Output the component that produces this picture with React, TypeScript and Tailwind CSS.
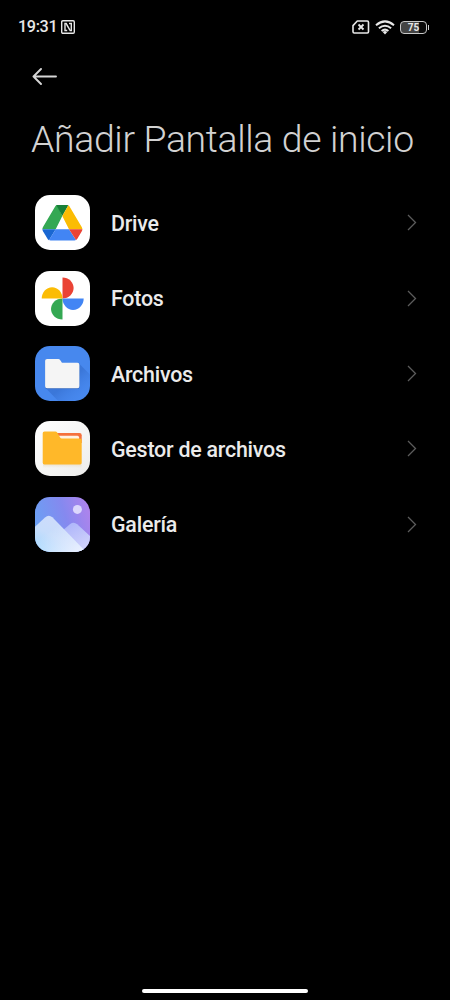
import React from 'react';

interface AppEntry {
  name: string;
  icon: React.ReactNode;
}

const iconClass = 'block h-[55px] w-[55px] rounded-[15px]';

const DriveIcon = () => (
  <svg viewBox="0 0 55 55" className={iconClass}>
    <rect width="55" height="55" fill="#fff" />
    <path d="M22.5 10L27.3 21L20.7 34.3H7.4Q7.3 33.2 8 32L20.3 11.2Q21 10 22.5 10Z" fill="#34a853" />
    <path d="M21.3 10.1Q22 9.9 22.5 9.9H32Q32.7 9.9 33.4 10.2L27.3 21Z" fill="#188038" />
    <path d="M33.4 10.2Q34 10.5 34.4 11.2L46.7 32Q47.4 33.2 47.4 34.3H34L27.3 21Z" fill="#fbbc04" />
    <path d="M7.4 34.3H20.7L14 45.3Q13.2 44.8 12.8 44.2L8 36.3Q7.4 35.3 7.4 34.3Z" fill="#1967d2" />
    <path d="M20.7 34.3H34L41 45Q40.3 45.4 39.5 45.4H15.5Q14.7 45.4 14 45.1Z" fill="#4285f4" />
    <path d="M34 34.3H47.4Q47.4 35.3 46.8 36.3L42.2 44Q41.8 44.7 41 45.1Z" fill="#ea4335" />
  </svg>
);

const PhotosIcon = () => (
  <svg viewBox="0 0 55 55" className={iconClass}>
    <rect width="55" height="55" fill="#fff" />
    <path d="M27.5 6.5C33.7 6.5 38.6 11.2 38.6 17S33.7 27.5 27.5 27.5Z" fill="#ea4335" />
    <path d="M48.7 27.5C48.7 33.8 44 38.9 38.1 38.9S27.5 33.8 27.5 27.5Z" fill="#4285f4" />
    <path d="M27.5 48.6C21 48.6 16 43.9 16 38.1S21 27.5 27.5 27.5Z" fill="#34a853" />
    <path d="M6.7 27.5C6.7 21.2 11.3 16.2 17.1 16.2S27.5 21.2 27.5 27.5Z" fill="#fbbc04" />
  </svg>
);

const FilesIcon = () => (
  <svg viewBox="0 0 55 55" className={iconClass}>
    <defs>
      <linearGradient id="filesShadow" x1="0" y1="0" x2="1" y2="1">
        <stop offset="0.5" stopColor="#2c62bf" stopOpacity="0.45" />
        <stop offset="0.85" stopColor="#3d7ae0" stopOpacity="0" />
      </linearGradient>
    </defs>
    <rect width="55" height="55" fill="#4788ee" />
    <path d="M43.8 17.2L55 28.4V55H23.2L10.6 42Z" fill="url(#filesShadow)" />
    <path d="M12 13.3H23.4Q24.4 13.3 25 14.2L27 17.1H42.5Q44.4 17.1 44.4 19V40.8Q44.4 42.7 42.5 42.7H12Q10.1 42.7 10.1 40.8V15.2Q10.1 13.3 12 13.3Z" fill="#2f62b5" />
    <path d="M12 12.9H23.4Q24.4 12.9 25 13.8L27 16.8H42.5Q44.4 16.8 44.4 18.7V40.3Q44.4 42.2 42.5 42.2H12Q10.1 42.2 10.1 40.3V14.8Q10.1 12.9 12 12.9Z" fill="#f5f5f5" />
  </svg>
);

const FileManagerIcon = () => (
  <svg viewBox="0 0 55 55" className={iconClass}>
    <defs>
      <linearGradient id="managerBg" x1="0" y1="0" x2="1" y2="1">
        <stop offset="0" stopColor="#ffffff" />
        <stop offset="1" stopColor="#ededeb" />
      </linearGradient>
      <linearGradient id="managerShadow" x1="0" y1="0" x2="0" y2="1">
        <stop offset="0" stopColor="#e8ddc8" />
        <stop offset="1" stopColor="#e8ddc8" stopOpacity="0" />
      </linearGradient>
    </defs>
    <rect width="55" height="55" fill="url(#managerBg)" />
    <rect x="8" y="42" width="38.5" height="5" fill="url(#managerShadow)" />
    <path d="M22 12H44.5Q46.7 12 46.7 14.2V22H22Z" fill="#f5713c" />
    <path d="M23 14.8H42.5Q44 14.8 44 16.3V21H23Z" fill="#fff2e2" />
    <path d="M9.5 10.5H20.4Q21.5 10.5 22.2 11.4L25.1 16.5Q25.7 17.5 26.9 17.5H45Q46.7 17.5 46.7 19.2V41.7Q46.7 43.5 45 43.5H9.5Q7.7 43.5 7.7 41.7V12.3Q7.7 10.5 9.5 10.5Z" fill="#ffb829" />
  </svg>
);

const GalleryIcon = () => (
  <svg viewBox="0 0 55 55" className={iconClass}>
    <defs>
      <linearGradient id="sky" x1="0" y1="0.5" x2="1" y2="0.2">
        <stop offset="0" stopColor="#6aa0f4" />
        <stop offset="0.55" stopColor="#8589ef" />
        <stop offset="1" stopColor="#b083ec" />
      </linearGradient>
      <linearGradient id="frontHill" x1="0.7" y1="0.2" x2="0.1" y2="1">
        <stop offset="0" stopColor="#cfdcfb" />
        <stop offset="0.5" stopColor="#c7ddfb" />
        <stop offset="1" stopColor="#a5d9ff" />
      </linearGradient>
      <linearGradient id="frontLight" x1="0" y1="0" x2="1" y2="1">
        <stop offset="0.35" stopColor="#e9efff" stopOpacity="0" />
        <stop offset="1" stopColor="#edf2ff" />
      </linearGradient>
      <linearGradient id="backHill" x1="0" y1="0" x2="0.6" y2="1">
        <stop offset="0" stopColor="#a9b2fa" />
        <stop offset="1" stopColor="#d0d2fb" />
      </linearGradient>
    </defs>
    <rect width="55" height="55" fill="url(#sky)" />
    <circle cx="42.4" cy="12.4" r="4.5" fill="#dcd7fc" />
    <path d="M27 34L35.2 27.1Q38.7 24.3 42.2 27.3L55 39V55H27Z" fill="url(#backHill)" />
    <path d="M0 29.7L10 20.4Q13.7 17.2 17.4 20.3L51 55H0Z" fill="url(#frontHill)" />
    <path d="M0 29.7L10 20.4Q13.7 17.2 17.4 20.3L51 55H0Z" fill="url(#frontLight)" />
  </svg>
);

const entries: AppEntry[] = [
  { name: 'Drive', icon: <DriveIcon /> },
  { name: 'Fotos', icon: <PhotosIcon /> },
  { name: 'Archivos', icon: <FilesIcon /> },
  { name: 'Gestor de archivos', icon: <FileManagerIcon /> },
  { name: 'Galería', icon: <GalleryIcon /> },
];

const StatusBar = () => (
  <div className="flex h-[54px] items-center justify-between pl-[18px] pr-[21px] text-[#e8e8e8]">
    <div className="flex items-center gap-1">
      <span className="w-[39px] whitespace-nowrap pt-px text-[16.2px] leading-none font-[480] tracking-[-0.35px]">19:31</span>
      <svg width="14" height="14" viewBox="0 0 14 14" fill="none" stroke="currentColor">
        <rect x="0.7" y="0.7" width="12.6" height="12.6" rx="1.2" strokeWidth="1.4" />
        <path d="M6.2 10.5H4V3.5H5.2L8.6 9.6M8 3.5H10.3V10.5H9.2L5.8 5" strokeWidth="1.4" />
      </svg>
    </div>
    <div className="flex items-center">
      <svg width="18" height="14" viewBox="0 0 18 14" fill="none" stroke="currentColor">
        <path d="M5.3 1H15.3Q16.5 1 16.5 2.2V11.8Q16.5 13 15.3 13H2.2Q1 13 1 11.8V5.6Z" strokeWidth="1.6" strokeLinejoin="round" />
        <path d="M6.5 4.5L11.5 9.5M11.5 4.5L6.5 9.5" strokeWidth="1.8" />
      </svg>
      <svg className="ml-[5px]" width="20" height="15" viewBox="0 0 20 15" fill="none" stroke="currentColor" strokeWidth="2">
        <path d="M1 5.2Q10 -2.4 19 5.2" />
        <path d="M3.9 8.3Q10 3.1 16.1 8.3" />
        <path d="M6.6 11.1Q10 8.2 13.4 11.1" />
        <path d="M7.7 12Q10 10.2 12.3 12L10 14.5Z" fill="currentColor" stroke="none" />
      </svg>
      <div className="ml-[5px] flex h-[13px] w-[27px] items-center justify-center rounded-[4px] border border-[#c8c8c8] bg-[linear-gradient(to_right,#444_72%,#0a0a0a_72%)] pt-px text-[10px] leading-none font-bold">
        75
      </div>
      <div className="ml-px h-[5px] w-px bg-[#cfcfcf]" />
    </div>
  </div>
);

const App: React.FC = () => {
  return (
    <div className="flex h-[1000px] w-[450px] flex-col overflow-hidden bg-black font-[Roboto,sans-serif]">
      <StatusBar />

      {/* Header */}
      <header>
        <button className="ml-[32px] mt-[14px] block" aria-label="Atrás">
          <svg width="25" height="17" viewBox="0 0 25 17" fill="none" stroke="#d6d6d6" strokeWidth="1.9">
            <path d="M9 1L1.5 8.5L9 16M1.5 8.5H24" strokeLinecap="round" strokeLinejoin="round" />
          </svg>
        </button>
        <h1 className="ml-[31px] mt-[32px] h-[44px] whitespace-nowrap text-[37.4px] leading-[45px] font-light tracking-[-0.35px] text-[#d2d2d2]">
          Añadir Pantalla de inicio
        </h1>
      </header>

      {/* App list */}
      <ul className="mt-[34.3px] flex flex-col gap-[20.4px]">
        {entries.map((entry) => (
          <li key={entry.name} className="flex h-[55px] items-center pl-[35px] pr-[33px]">
            {entry.icon}
            <span className="ml-[21px] flex-1 pt-[2px] text-[21.4px] leading-6 font-[485] tracking-[-0.22px] text-[#ebebeb]">
              {entry.name}
            </span>
            <svg width="10" height="17" viewBox="0 0 10 17" fill="none" stroke="#5c5c5c" strokeWidth="1.3">
              <path d="M1 1L8.5 8.5L1 16" />
            </svg>
          </li>
        ))}
      </ul>

      {/* Gesture bar */}
      <div className="mx-auto mb-[7px] mt-auto h-1 w-[166px] rounded-full bg-white" />
    </div>
  );
};

export default App;
